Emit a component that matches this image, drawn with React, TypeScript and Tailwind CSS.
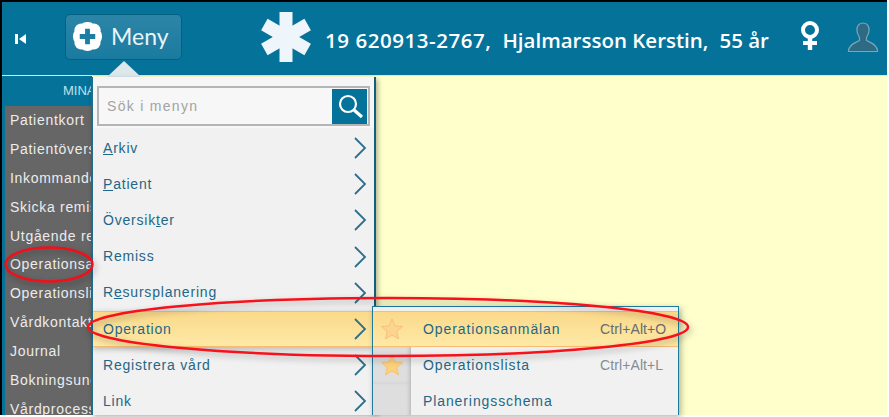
const sidebarItems = ["Patientkort","Patientöversikt","Inkommande","Skicka remiss","Utgående remiss","Operationsanmälan","Operationslista","Vårdkontakt","Journal","Bokningsunderlag","Vårdprocess"];

function Chevron() {
  return (
    <svg width="14" height="24" viewBox="0 0 14 24" className="shrink-0">
      <polyline points="2,2 12,12 2,22" fill="none" stroke="#2c6f8c" strokeWidth="1.8" />
    </svg>
  );
}

function Star({ faded }: { faded?: boolean }) {
  return (
    <svg width="22" height="22" viewBox="0 0 24 24">
      <polygon points="12,1 15.2,8.6 23.4,9.3 17.2,14.7 19.1,22.8 12,18.5 4.9,22.8 6.8,14.7 .6,9.3 8.8,8.6" fill={faded ? "#fbd58f" : "#fdd27a"} stroke="#f7bd73" strokeWidth="1" />
    </svg>
  );
}

function MenuRow({ label, active }: { label: React.ReactNode; active?: boolean }) {
  return (
    <div className={`flex h-[36.2px] shrink-0 items-center justify-between pl-[10px] pr-[7px] text-[14px] tracking-[0.8px] text-[#1f6787] ${active ? "border-y border-[#f8bd72] bg-gradient-to-b from-[#fbd98a] to-[#fde9a6] shadow-[0_2px_6px_rgba(0,0,0,0.25)]" : ""}`}>
      <span>{label}</span>
      <Chevron />
    </div>
  );
}

function SubRow({ label, keys, active, star }: { label: string; keys?: string; active?: boolean; star?: boolean }) {
  return (
    <div className={`flex h-[36.2px] shrink-0 items-center text-[14px] tracking-[0.9px] text-[#1f6787] ${active ? "border-y border-[#f8bd72] bg-gradient-to-b from-[#fbd98a] to-[#fde9a6]" : ""}`}>
      <div className={`flex h-full w-[38px] shrink-0 items-center justify-center ${active ? "" : "bg-[#dedede] shadow-[inset_-3px_0_4px_-2px_rgba(0,0,0,0.2)]"}`}>
        {star && <Star faded={active} />}
      </div>
      <span className="ml-[12px] w-[177px]">{label}</span>
      {keys && <span className={`tracking-[0.1px] ${active ? "text-[#666c70]" : "text-[#858c94]"}`}>{keys}</span>}
    </div>
  );
}

export default function App() {
  return (
    <div className="relative h-[417px] w-[889px] overflow-hidden bg-white font-['Liberation_Sans',sans-serif]">
      <div className="flex h-[415px] w-[887px] flex-col border-l-2 border-t-2 border-black">
        <header className="flex h-[73px] shrink-0 items-center bg-[#05729a] text-white">
          <svg width="12" height="12" viewBox="0 0 12 12" className="ml-[13px] mt-[1px]">
            <rect x="0" y="1" width="3" height="10" fill="#fff" />
            <polygon points="11,1 11,11 4,6" fill="#fff" />
          </svg>
          <div className="ml-[38px] mb-[4px] flex h-[46px] w-[117px] items-center rounded-[5px] border border-[#055f80] bg-gradient-to-b from-[#2c85a7] to-[#197ba0] pl-[6px]">
            <svg width="31" height="31" viewBox="0 0 32 32">
              <rect x="1" y="7" width="30" height="18" rx="8.5" fill="#fff" />
              <rect x="7" y="1" width="18" height="30" rx="8.5" fill="#fff" />
              <circle cx="9.5" cy="9.5" r="7" fill="#fff" />
              <circle cx="22.5" cy="9.5" r="7" fill="#fff" />
              <circle cx="9.5" cy="22.5" r="7" fill="#fff" />
              <circle cx="22.5" cy="22.5" r="7" fill="#fff" />
              <path d="M13.5 8 h5 v5.5 h5.5 v5 h-5.5 v5.5 h-5 v-5.5 h-5.5 v-5 h5.5 z" fill="#1d7ea3" />
            </svg>
            <span className="ml-[8px] font-['Lato',sans-serif] text-[23px] leading-none text-[#eaf4f8]">Meny</span>
          </div>
          <svg width="52" height="52" viewBox="0 0 52 52" className="ml-[78px] mb-[3px]" fill="#eef6fb">
            <rect x="19.5" y="1" width="13" height="50" />
            <rect x="19.5" y="1" width="13" height="50" transform="rotate(60 26 26)" />
            <rect x="19.5" y="1" width="13" height="50" transform="rotate(120 26 26)" />
          </svg>
          <div className="ml-[13px] mt-[3px] flex whitespace-pre font-['Open_Sans',sans-serif] text-[20.5px] font-semibold leading-none">
            <span className="tracking-[0.55px]">19 620913-2767,</span>
            <span className="ml-[11px]">Hjalmarsson Kerstin,</span>
            <span className="ml-[11px]">55 år</span>
          </div>
          <svg width="20" height="32" viewBox="0 0 20 32" className="ml-[31px] mb-[5px]">
            <circle cx="10" cy="10" r="7" fill="none" stroke="#fff" strokeWidth="4" />
            <rect x="7.8" y="16" width="4.4" height="14" fill="#fff" />
            <rect x="3" y="21" width="14" height="4" fill="#fff" />
          </svg>
          <svg width="32" height="32" viewBox="0 0 32 32" className="ml-[27px] mb-[3px]">
            <path d="M16 2 c-4.5 0 -6.5 3.5 -6 8 c.3 3 1.5 5 2.5 6.5 v3 c-3 2 -10 3 -11 10 v1 h29 v-1 c-1 -7 -8 -8 -11 -10 v-3 c1 -1.5 2.2 -3.5 2.5 -6.5 c.5 -4.5 -1.5 -8 -6 -8 z" fill="#2f6a84" stroke="#7ba6b8" strokeWidth="1.2" />
          </svg>
        </header>
        <main className="flex min-h-0 flex-1 border-t border-[#d5e7ee] bg-[#ffffcc]">
          <div className="flex w-[90px] shrink-0 flex-col overflow-hidden border-l-[3px] border-[#05729a] bg-[#05729a]">
            <div className="h-[30px] shrink-0 whitespace-nowrap pl-[58px] pt-[7px] text-[13px] leading-[16px] text-[#bfe0ec]">MINA</div>
            <div className="flex flex-1 flex-col overflow-hidden bg-[#666666]">
              {sidebarItems.map((item) => (
                <div key={item} className="flex h-[28.9px] shrink-0 items-center whitespace-nowrap pl-[5px] text-[14px] tracking-[0.7px] text-[#ececec]">{item}</div>
              ))}
            </div>
          </div>
        </main>
      </div>

      {/* Menu caret */}
      <div className="absolute left-[107px] top-[61px] h-0 w-0 border-x-[17px] border-b-[16px] border-x-transparent border-b-[#dde8ec]" />

      {/* Main menu */}
      <div className="absolute left-[91px] top-[77px] flex h-[338px] w-[285px] flex-col overflow-hidden border-x-2 border-x-[#0f5f7e] border-l-[#1e6d8b] bg-[#f1f1f1] shadow-[2px_2px_5px_rgba(0,0,0,0.3)]">
        <div className="h-[51px] shrink-0 bg-[#f6f6f6] pl-[4px] pr-[4px] pt-[9px]">
          <div className="flex h-[40px] w-full items-center border-2 border-[#b5b5b5] bg-[#f7f7f7] pl-[8px] pr-[1px]">
            <span className="flex-1 text-[14px] tracking-[1.3px] text-[#a3a3a3]">Sök i menyn</span>
            <div className="flex h-[35px] w-[35px] items-center justify-center bg-[#05729a]">
              <svg width="28" height="28" viewBox="0 0 28 28">
                <circle cx="12" cy="12" r="8" fill="none" stroke="#fff" strokeWidth="2.2" />
                <line x1="18" y1="18" x2="26" y2="25" stroke="#fff" strokeWidth="3.2" />
              </svg>
            </div>
          </div>
        </div>
        <div className="flex flex-col pt-[2px]">
          <MenuRow label={<><u>A</u>rkiv</>} />
          <MenuRow label={<><u>P</u>atient</>} />
          <MenuRow label={<>Översik<u>t</u>er</>} />
          <MenuRow label="Remiss" />
          <MenuRow label={<>R<u>e</u>sursplanering</>} />
          <MenuRow label="Operation" active />
          <MenuRow label="Registrera vård" />
          <MenuRow label="Link" />
        </div>
      </div>

      {/* Sub menu */}
      <div className="absolute left-[372px] top-[306px] flex h-[109px] w-[307px] flex-col overflow-hidden border-x border-t border-[#1e7a9c] bg-[#f1f1f1] pt-[4px] shadow-[2px_2px_6px_rgba(0,0,0,0.3)]">
        <SubRow label="Operationsanmälan" keys="Ctrl+Alt+O" active star />
        <SubRow label="Operationslista" keys="Ctrl+Alt+L" star />
        <SubRow label="Planeringsschema" />
      </div>

      {/* Red annotations */}
      <svg className="pointer-events-none absolute left-0 top-0 drop-shadow-[2px_3px_3px_rgba(0,0,0,0.3)]" width="889" height="417" viewBox="0 0 889 417" fill="none">
        <ellipse cx="49" cy="264.5" rx="43.5" ry="17" stroke="#f0101a" strokeWidth="2.5" />
        <ellipse cx="388" cy="327" rx="300" ry="29" stroke="#f8101a" strokeWidth="2.5" />
      </svg>
    </div>
  );
}
